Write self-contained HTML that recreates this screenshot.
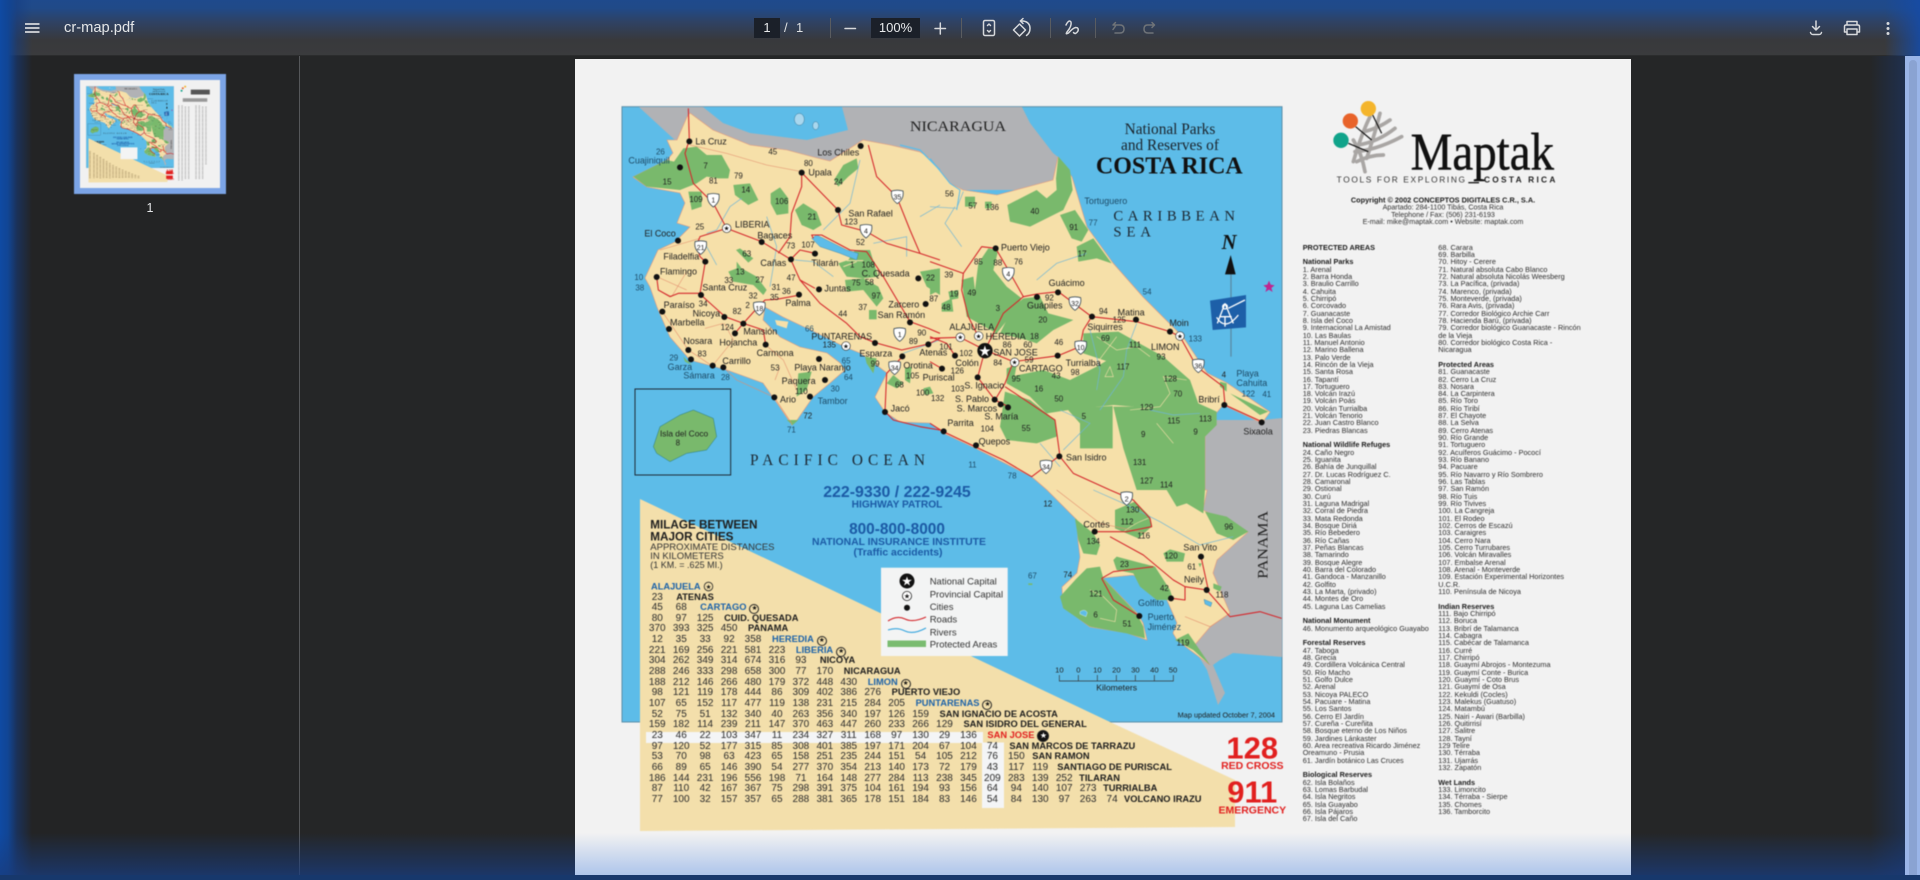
<!DOCTYPE html>
<html lang="en"><head><meta charset="utf-8"><title>cr-map.pdf</title>
<style>
html,body{margin:0;padding:0;width:1920px;height:880px;overflow:hidden;background:#252627;font-family:"Liberation Sans",sans-serif}
.a{position:absolute}
#hd{left:0;top:0;width:1920px;height:56px;background:linear-gradient(#1f4a8c 0,#204a88 8px,#2f4263 22px,#38393c 40px,#3a3b3d 55px,#1c1c1d 56px)}
#side{left:0;top:56px;width:300px;height:824px;background:#232425;border-right:1px solid #55575a;box-sizing:border-box}
#title{left:64px;top:19px;font-size:14.7px;line-height:18px;color:#e4e6e8;filter:blur(.3px)}
.sep{position:absolute;top:18px;width:1px;height:20px;background:#5a5c60}
.box{position:absolute;top:18px;height:20px;background:#1b2029;color:#e8eaec;font-size:13px;line-height:20px;text-align:center}
.tb{position:absolute;top:18px;color:#dfe1e3;font-size:13px;line-height:20px}
#pg{left:575px;top:59px;width:1056px;height:821px;background:#f2f2f2}
#tbl{left:645.3px;top:592.5px;font-size:10px;line-height:10.67px;color:#2a2a2a;filter:blur(.4px)}
#tbl div{display:flex;height:10.67px;white-space:nowrap}
#tbl i{font-style:normal;width:23.95px;text-align:center;flex:none}
#tbl b{margin-left:7px;font-size:9.3px;position:relative;top:-1px;color:#1d1d1d}
#tbl b.u{color:#1c62a8}#tbl b.r{color:#e1201f}
#tbl s{display:inline-block;text-decoration:none;width:8px;height:8px;border:1px solid #222;border-radius:50%;font-size:6.5px;line-height:8px;text-align:center;color:#111;margin-left:3px;vertical-align:0;font-weight:400}
.ls{font-size:7.3px;line-height:7.33px;color:#2e2e2e;white-space:pre;filter:blur(.4px)}
.ls b{color:#1b1b1b}
#lft{left:0;top:0;width:32px;height:880px;background:linear-gradient(90deg,#0f4aa3 0,#114594 8px,rgba(20,60,130,.55) 17px,rgba(20,60,130,0) 32px)}
#rgt{left:1870px;top:56px;width:35px;height:824px;background:linear-gradient(90deg,rgba(25,50,100,0),rgba(25,55,110,.55))}
#rht{left:1885px;top:0;width:35px;height:56px;background:linear-gradient(90deg,rgba(25,75,160,0),rgba(22,75,165,.9))}
#bar{left:1905px;top:56px;width:15px;height:824px;background:#9ab5e8}
#bar2{left:1909px;top:60px;width:8px;height:820px;background:#8aa3d2;border-radius:4px 4px 0 0}
#btm{left:575px;top:833px;width:1056px;height:42px;background:linear-gradient(rgba(80,135,225,0),rgba(80,135,225,.42))}
#btmL{left:0;top:833px;width:575px;height:42px;background:linear-gradient(rgba(25,60,125,0),rgba(25,60,125,.75))}
#btmR{left:1631px;top:833px;width:274px;height:42px;background:linear-gradient(rgba(25,60,125,0),rgba(25,60,125,.75))}
#btm2{left:0;top:875px;width:1920px;height:5px;background:#17386c}
</style></head><body>
<div class="a" id="side"></div>
<div class="a" id="pg"></div>

<svg class="a" style="left:0;top:0;filter:blur(.4px)" width="1920" height="880" viewBox="0 0 1920 880" font-family="'Liberation Sans',sans-serif" fill="#1d1d1d">
<defs>
<g id="sh"><path d="M-17-17Q0-22 17-17Q21 6 0 21Q-21 6-17-17Z" fill="#fff" stroke="#3a4a55" stroke-width="2.5"/></g>
</defs>
<g id="map">
<rect x="622" y="106.7" width="660" height="615.3" fill="#5dbce8" stroke="#5b8ea8" stroke-width="1"/>
<path d="M639 107H1022L1030 123L1053 153L1058 157L1053 190H930L700 150L677 142Z" fill="#b1b2b5"/>
<path d="M703 107H842L848 130L807 140L750 133L723 123Z" fill="#5dbce8"/>
<path d="M1282 418V657L1233 653L1220 660L1213 665L1225 693L1218 705L1207 670L1193 647L1180 500L1205 420L1262 420Z" fill="#b1b2b5"/>
<path fill="#f6e0a9" stroke="#e79a7a" stroke-width=".6" d="M677 140L687 117L690 113L713 130L750 145L787 150L817 158L830 161L863 140L890 145L920 152L930 158L950 183L963 190L997 195L1027 187L1053 180L1058 157L1072 177L1087 227L1113 263L1143 297L1183 337L1207 373L1227 383L1270 412L1262 423L1223 405L1213 417L1205 437L1205 490L1207 490L1203 510L1248 532L1217 560L1213 573L1230 613L1210 627L1193 647L1210 665L1190 650L1177 640L1173 633L1177 623L1167 600L1157 587L1133 575L1103 578L1137 613L1143 623L1147 640L1127 633L1090 627L1063 607L1062 587L1077 573L1080 557L1078 540L1077 520L1047 490L1032 477L975 448L943 433L930 423L900 422L885 412L875 397L887 373L870 360L860 353L845 347L817 333L783 317L765 307L763 320L780 337L800 347L827 353L840 363L845 370L830 383L813 397L797 420L792 425L777 403L763 383L727 370L690 360L670 337L657 307L650 287L645 278L658 250L675 242L690 227L677 223L685 203L680 193L647 187L633 177L667 160L673 153L667 140Z"/>

<!-- Z4 shapes -->
<g transform="translate(600 90) scale(.33333)">
<g fill="#79b96c">
<path d="M100 260L200 210L222 215L250 175L290 170L320 195L365 195L390 240L385 265L355 265L320 260L290 280L240 300L140 290Z"/>
<path d="M265 305L305 305L305 350L275 360Z"/>
<path d="M400 285L450 280L475 330L445 345L405 315Z"/>
<path d="M512 310L540 292L565 325L565 370L530 375L512 340Z"/>
<path d="M585 360L610 340L650 365L665 405L640 420L605 405Z"/>
<path d="M702 270L730 225L770 205L775 235L745 260L715 290Z"/>
<path d="M408 480L420 475L460 505L445 518Z"/>
<path d="M385 545L410 535L410 515L425 535L470 560L500 600L490 615L460 585L400 575Z"/>
<path d="M715 520L745 510L765 480L810 480L825 530L835 560L790 565L740 560Z"/>
<path d="M735 570L790 565L835 590L850 625L830 650L790 600L740 605Z"/>
<path d="M807 660H830V688H807Z"/>
<path d="M595 850L635 845L620 900L590 920Z"/>
<path d="M960 545L1020 535L1020 615L980 590Z"/>
<path d="M795 800L830 805L820 850L800 820Z"/>
<path d="M860 880L880 855L910 880L890 895Z"/>
<path d="M915 835L935 830L930 880L915 870Z"/>
<path d="M970 895L990 890L1000 910L975 915Z"/>
<path d="M250 800L275 825L255 815Z"/>
<path d="M560 990L595 990L578 1005Z"/>
</g>
<path d="M525 690L565 695L560 715L530 705Z" fill="#f6e0a9"/>
<path d="M635 445L650 435L740 480L775 490L770 510L720 490L660 470Z" fill="#5dbce8" stroke="#2f6f96" stroke-width="1"/>
<path d="M740 512H790M730 530L770 515" stroke="#f6e0a9" stroke-width="3" fill="none"/>
<path d="M900 165L960 180L1020 240" fill="none" stroke="#5dbce8" stroke-width="4"/>
<ellipse cx="598" cy="88" rx="15" ry="18" fill="#a9d7ee" stroke="#3c7a9a" stroke-width="1.5"/><ellipse cx="647" cy="107" rx="9" ry="12" fill="#a9d7ee" stroke="#3c7a9a" stroke-width="1.5"/>
<rect x="105" y="897" width="287" height="258" fill="none" stroke="#1e2a36" stroke-width="3"/>
<path d="M160 1070L180 1010L240 975L280 960L340 985L350 1040L320 1080L260 1090L210 1115L170 1090Z" fill="#79b96c" stroke="#2a7a80" stroke-width="1.5"/>
<g fill="none" stroke="#6fb5d6" stroke-width="2"><path d="M320 430L350 420L390 350L425 325M320 470L350 525M585 510L640 515L700 560M670 420L750 340L780 210M500 380L530 470L510 590M820 460L920 440L920 500M910 790L1020 750M960 380L1020 345"/></g>
<g fill="none" stroke="#e28c6c" stroke-width="1.6"><path d="M270 165L380 190L500 225L605 245M170 560L260 600M187 665L265 780L337 828M337 828L400 750L373 700M370 832L410 870L523 922M523 922L575 1000M497 765L550 810L590 900M175 600L215 620L260 545M315 715L370 700M540 830L525 870M300 445L180 480"/></g>
<g fill="none" stroke="#d4262b" stroke-width="3.2" stroke-linejoin="round"><g id="r4">
<path d="M265 55L268 150L255 190L280 280L340 340L380 415L485 455L572 508L600 480L645 490M572 508L600 570L660 640L740 700L780 740L825 758L905 780L985 762L1020 745"/>
<path d="M380 415L300 440L290 465L300 500L316 515L300 610L235 610L210 620L175 600L170 560"/>
<path d="M605 248L714 360L725 405L800 425L860 460L960 490L1020 510"/>
<path d="M605 248L605 290L575 370L570 440L535 490"/>
<path d="M805 165L830 260L890 320L930 420L960 490"/>
<path d="M303 615L375 680L430 700L490 720L497 765M430 700L405 730M600 615L530 628L495 630L475 650L430 700"/>
<path d="M640 445L635 435L665 435L750 480L800 485L850 560L930 695L985 715L1020 730"/>
<path d="M907 800L860 850L855 965L880 990L960 1010L1020 1020"/>
<path d="M645 595L600 570"/>
</g></g>
</g>

<!-- Z5 shapes -->
<g transform="translate(930 90) scale(.33333)">
<g fill="#79b96c">
<path d="M232 345L320 300L350 325L380 300L378 265L385 200L420 240L428 300L400 360L300 410L240 395Z"/>
<path d="M390 375L435 360L475 420L455 455L425 445Z"/>
<path d="M440 470L490 445L545 520L500 505L445 515Z"/>
<path d="M95 570L130 560L135 600L145 520L175 475L205 480L190 540L230 590L275 625L240 680L200 730L110 680Z"/>
<path d="M280 625L330 620L355 670L430 690L370 720L320 760L290 750L210 730L250 650Z"/>
<path d="M460 730L565 725L700 800L780 870L805 940L860 965L860 1005L825 1040L825 1200L620 1200L580 1075L550 950L610 950L580 830L460 790Z"/>
<path d="M240 860L340 840L420 870L500 830L550 800L600 850L610 950L550 945L415 960L350 970L300 920L230 880Z"/>
<path d="M410 955L548 948L548 1075L450 1075L450 1000Z"/>
<path d="M225 905L300 930L375 990L380 1040L320 1060L230 1050L210 1010Z"/>
<path d="M35 640L65 625L70 665L35 665Z"/><path d="M55 605L85 600L85 625L60 630Z"/>
<path d="M0 540L30 535L30 600L0 615Z"/>
<path d="M105 320H135V350H105Z"/><path d="M165 335H185V355H165Z"/>
<path d="M230 835L260 825L250 880L230 880Z"/>
<path d="M130 1060L148 1060L140 1078Z"/>
<path d="M870 875L890 880L890 905L870 890Z"/><path d="M900 910L1015 965L990 975Z"/>
</g>
<path d="M0 205L60 280L90 300L80 360" fill="none" stroke="#5dbce8" stroke-width="3"/>
<g fill="none" stroke="#6fb5d6" stroke-width="2"><path d="M75 350L45 400L95 470M0 350L80 355L100 305M320 570L380 520L470 490M480 720L510 840L500 900M620 700L590 780L580 860L510 960M390 960L480 1000L400 1080M330 1060L390 1130M660 960L730 975L810 970"/></g>
<g fill="none" stroke="#f6e0a9" stroke-width="1.8"><path d="M500 740L560 780L620 770L660 800M600 960L690 950L720 910L700 860L770 870M680 1000L730 1060M500 820L560 740M540 830L550 860L525 860L540 830Z"/></g>
<g fill="none" stroke="#d4262b" stroke-width="3.2" stroke-linejoin="round"><g id="r5">
<path d="M0 515L100 550L95 600L115 680L145 740"/>
<path d="M100 550L155 470L197 475L235 540L280 620L320 612L385 605L485 680L460 720L450 770"/>
<path d="M485 680L620 695L720 725L750 740L800 830L880 890L885 945L995 995"/>
<path d="M280 620L220 670L165 780"/>
<path d="M0 745L90 742L165 780L250 815L385 797L450 770"/>
<path d="M0 740L50 760L75 797M0 815L36 836M165 780L143 862L194 929"/>
<path d="M250 815L225 880L195 930L235 950"/>
<path d="M225 890L375 990L390 1100L430 1150L540 1200"/>
<path d="M385 1100L345 1130L305 1160L220 1110L135 1070L40 1025L0 1000"/>
</g></g>
<path d="M903 553V800" stroke="#5a8ba5" stroke-width="4"/>
<path d="M885 553H917L902 495Z" fill="#111"/>
<text x="875" y="477" font-family="'Liberation Serif',serif" font-style="italic" font-weight="700" font-size="62" fill="#111">N</text>
<path d="M840 632L948 615V712L848 720Z" fill="#1d5fa8"/>
<g fill="none" stroke="#fff" stroke-width="4"><path d="M885 640L862 700M885 640L910 700M868 680H905M860 682Q885 725 925 675M885 680V710M895 655L945 630"/><circle cx="885" cy="650" r="7"/></g>
<path d="M1017 572L1022 584L1034 586L1024 594L1028 606L1017 599L1006 606L1010 594L1000 586L1012 584Z" fill="#c0258f"/>
</g>

<!-- Z7 shapes -->
<g transform="translate(1000 490) scale(.33333)">
<g fill="#79b96c">
<path d="M345 60L405 35L450 80L455 110L415 145L345 115Z"/>
<path d="M615 65L680 80L745 125L700 150L650 130Z"/>
<path d="M490 190L510 178L555 190L550 215L500 215Z"/>
<path d="M340 210L350 200L465 230L510 300L520 330L470 330L420 290L400 250L350 240Z"/>
<path d="M225 85L280 130L300 165L290 195L250 190L235 150Z"/>
<path d="M180 320L230 265L260 235L300 230L310 265L410 370L430 410L435 445L380 430L270 410L190 355Z"/>
<path d="M525 450L565 430L630 525L580 480Z"/>
<path d="M500 0L615 0L610 70L560 40L530 50Z"/>
<path d="M640 280L665 290L660 305L640 295Z"/>
<path d="M595 220L605 220L600 232Z"/>
</g>
<path d="M240 365Q255 355 262 368L258 380L240 372Z" fill="#5dbce8" stroke="#fff"/>
<path d="M612 328L636 338L632 350L615 342Z" fill="#5dbce8" stroke="#2f6f96"/>
<path d="M85 280H97V285H85Z" fill="#79b96c"/>
<g fill="none" stroke="#f6e0a9" stroke-width="1.8"><path d="M270 300L310 320L350 360L345 395L300 385M365 130Q400 100 445 85"/></g>
<g fill="none" stroke="#6fb5d6" stroke-width="2"><path d="M280 0L370 40L480 95L600 165L700 140"/></g>
<g fill="none" stroke="#e28c6c" stroke-width="1.6"><path d="M170 0L300 100L440 130M555 380L630 410L690 370"/></g>
<g fill="none" stroke="#d4262b" stroke-width="3.2" stroke-linejoin="round"><g id="r7">
<path d="M330 0L400 30L450 85L455 110L380 125L285 125"/>
<path d="M330 140L430 195L520 270L555 290L620 300L690 380L780 365L845 385"/>
<path d="M555 290L555 330L515 325"/><path d="M603 200L625 300"/>
<path d="M305 265L340 245L460 230"/><path d="M305 265L340 330L418 378"/>
</g></g>
<g fill="#111"><circle cx="284" cy="125" r="9"/><circle cx="603" cy="200" r="9"/><circle cx="620" cy="300" r="9"/><circle cx="513" cy="325" r="9"/><circle cx="418" cy="378" r="9"/></g>
<g font-size="27"><text x="250" y="112">Cortés</text><text x="550" y="182">San Vito</text><text x="552" y="278">Neily</text><text x="414" y="348" fill="#1c4a66">Golfito</text><text x="443" y="390" fill="#1c4a66">Puerto</text><text x="443" y="420" fill="#1c4a66">Jiménez</text>
<g font-size="24"><text x="130" y="50">12</text><text x="378" y="68">130</text><text x="362" y="104">112</text><text x="412" y="145">116</text><text x="260" y="162">134</text><text x="673" y="118">96</text><text x="493" y="206">120</text><text x="562" y="238">61</text><text x="360" y="231">23</text><text x="190" y="262">74</text><text x="84" y="265" fill="#1c4a66">67</text><text x="268" y="320">121</text><text x="647" y="322">118</text><text x="480" y="303">42</text><text x="280" y="383">6</text><text x="368" y="410">51</text><text x="530" y="467">119</text></g></g>
<use href="#sh" transform="translate(380 25)"/><text x="380" y="34" font-size="22" text-anchor="middle">2</text>
<text x="805" y="268" transform="rotate(-90 803 268)" font-family="'Liberation Serif',serif" font-size="45" fill="#222" textLength="203" lengthAdjust="spacingAndGlyphs">PANAMA</text>
<path d="M178 555V573H520V555M235 555V573M292 555V573M349 555V573M406 555V573M463 555V573" fill="none" stroke="#333" stroke-width="2"/>
<g font-size="23" text-anchor="middle"><text x="178" y="548">10</text><text x="235" y="548">0</text><text x="292" y="548">10</text><text x="349" y="548">20</text><text x="406" y="548">30</text><text x="463" y="548">40</text><text x="519" y="548">50</text></g>
<text x="350" y="602" font-size="26" text-anchor="middle">Kilometers</text>
<text x="533" y="683" font-size="21" textLength="292" lengthAdjust="spacingAndGlyphs">Map updated October 7, 2004</text>
</g>

<!-- Z4 dots labels -->
<g transform="translate(600 90) scale(.33333)">
<g fill="#111"><circle cx="268" cy="154" r="9"/><circle cx="240" cy="232" r="9"/><circle cx="605" cy="248" r="9"/><circle cx="714" cy="360" r="9"/><circle cx="782" cy="168" r="9"/><circle cx="485" cy="456" r="9"/><circle cx="573" cy="508" r="9"/><circle cx="645" cy="491" r="9"/><circle cx="657" cy="598" r="9"/><circle cx="597" cy="614" r="9"/><circle cx="234" cy="452" r="9"/><circle cx="316" cy="515" r="9"/><circle cx="170" cy="561" r="9"/><circle cx="303" cy="615" r="9"/><circle cx="187" cy="665" r="9"/><circle cx="207" cy="717" r="9"/><circle cx="373" cy="681" r="9"/><circle cx="430" cy="701" r="9"/><circle cx="405" cy="730" r="9"/><circle cx="265" cy="780" r="9"/><circle cx="273" cy="808" r="9"/><circle cx="338" cy="827" r="9"/><circle cx="370" cy="832" r="9"/><circle cx="497" cy="764" r="9"/><circle cx="657" cy="807" r="9"/><circle cx="675" cy="870" r="9"/><circle cx="630" cy="920" r="9"/><circle cx="523" cy="922" r="9"/><circle cx="855" cy="966" r="9"/><circle cx="955" cy="565" r="9"/><circle cx="977" cy="642" r="9"/><circle cx="930" cy="697" r="9"/><circle cx="825" cy="759" r="9"/><circle cx="985" cy="763" r="9"/><circle cx="907" cy="799" r="9"/></g>
<g fill="#fff" stroke="#333" stroke-width="2"><circle cx="380" cy="415" r="13"/><circle cx="738" cy="768" r="13"/></g>
<g font-size="20" text-anchor="middle" fill="#111"><text x="380" y="422">★</text><text x="738" y="775">★</text></g>
<use href="#sh" transform="translate(340 330)"/><use href="#sh" transform="translate(892 320)"/><use href="#sh" transform="translate(798 423)"/><use href="#sh" transform="translate(302 472)"/><use href="#sh" transform="translate(478 655)"/><use href="#sh" transform="translate(899 733)"/><use href="#sh" transform="translate(884 833)"/>
<g font-size="21" text-anchor="middle"><text x="340" y="338">1</text><text x="892" y="328">35</text><text x="798" y="431">4</text><text x="302" y="480">21</text><text x="478" y="663">18</text><text x="899" y="741">1</text><text x="884" y="841">34</text></g>
<g font-size="27">
<text x="286" y="164">La Cruz</text><text x="85" y="221" fill="#1c4a66">Cuajiniquil</text><text x="652" y="197">Los Chiles</text><text x="625" y="256">Upala</text><text x="745" y="380">San Rafael</text><text x="405" y="413">LIBERIA</text><text x="472" y="445">Bagaces</text><text x="133" y="440">El Coco</text><text x="190" y="508">Filadelfia</text><text x="481" y="528">Cañas</text><text x="634" y="528">Tilarán</text><text x="785" y="560">C. Quesada</text><text x="180" y="554">Flamingo</text><text x="307" y="602">Santa Cruz</text><text x="673" y="605">Juntas</text><text x="556" y="648">Palma</text><text x="191" y="654">Paraíso</text><text x="278" y="680">Nicoya</text><text x="865" y="652">Zarcero</text><text x="833" y="684">San Ramón</text><text x="210" y="706">Marbella</text><text x="430" y="734">Mansión</text><text x="250" y="762">Nosara</text><text x="358" y="767">Hojancha</text><text x="634" y="748">PUNTARENAS</text><text x="958" y="797">Atenas</text><text x="470" y="798">Carmona</text><text x="778" y="800">Esparza</text><text x="203" y="840" fill="#1c4a66">Garza</text><text x="367" y="822">Carrillo</text><text x="583" y="842">Playa Naranjo</text><text x="910" y="836">Orotina</text><text x="250" y="866" fill="#1c4a66">Sámara</text><text x="545" y="882">Paquera</text><text x="540" y="937">Ario</text><text x="653" y="942" fill="#1c4a66">Tambor</text><text x="872" y="965">Jacó</text><text x="180" y="1040" font-size="25">Isla del Coco</text>
</g>
<g font-size="24">
<text x="168" y="194" fill="#1c4a66">26</text><text x="505" y="193">45</text><text x="612" y="228">80</text><text x="310" y="236">7</text><text x="327" y="280">81</text><text x="402" y="265">79</text><text x="188" y="284">15</text><text x="424" y="308">14</text><text x="702" y="283">24</text><text x="525" y="342">106</text><text x="268" y="336">109</text><text x="623" y="389">21</text><text x="733" y="404">123</text><text x="286" y="418">25</text><text x="559" y="476">73</text><text x="604" y="473">107</text><text x="768" y="465">52</text><text x="427" y="500">63</text><text x="750" y="532">1</text><text x="785" y="533">108</text><text x="978" y="572">22</text><text x="103" y="570" fill="#1c4a66">10</text><text x="106" y="602" fill="#1c4a66">38</text><text x="407" y="553">13</text><text x="466" y="577">27</text><text x="373" y="579">33</text><text x="560" y="571">47</text><text x="515" y="600">31</text><text x="546" y="612">36</text><text x="755" y="587">75</text><text x="795" y="585">58</text><text x="815" y="625">97</text><text x="988" y="635">87</text><text x="446" y="626">32</text><text x="510" y="630">35</text><text x="775" y="660">37</text><text x="296" y="650">34</text><text x="436" y="654">2</text><text x="398" y="672">82</text><text x="715" y="680">44</text><text x="362" y="720">124</text><text x="615" y="724" fill="#1c4a66">66</text><text x="952" y="737">90</text><text x="668" y="772">135</text><text x="927" y="762">89</text><text x="293" y="800">83</text><text x="208" y="812" fill="#1c4a66">29</text><text x="725" y="820" fill="#1c4a66">65</text><text x="812" y="829">99</text><text x="512" y="842">53</text><text x="732" y="870" fill="#1c4a66">64</text><text x="363" y="870" fill="#1c4a66">28</text><text x="918" y="866">105</text><text x="885" y="892">68</text><text x="692" y="905" fill="#1c4a66">30</text><text x="948" y="916">100</text><text x="585" y="912">110</text><text x="610" y="985">72</text><text x="561" y="1028" fill="#1c4a66">71</text><text x="227" y="1066">8</text>
</g>
<text x="450" y="1125" font-family="'Liberation Serif',serif" font-size="46" fill="#1c2630" textLength="525" xml:space="preserve">PACIFIC OCEAN</text>
</g>

<!-- Z5 dots labels -->
<g transform="translate(930 90) scale(.33333)">
<g fill="#111"><circle cx="197" cy="475" r="9"/><circle cx="321" cy="621" r="9"/><circle cx="384" cy="607" r="9"/><circle cx="486" cy="680" r="9"/><circle cx="618" cy="689" r="9"/><circle cx="720" cy="725" r="9"/><circle cx="383" cy="797" r="9"/><circle cx="75" cy="797" r="9"/><circle cx="36" cy="836" r="9"/><circle cx="143" cy="862" r="9"/><circle cx="194" cy="929" r="9"/><circle cx="212" cy="943" r="9"/><circle cx="234" cy="952" r="9"/><circle cx="41" cy="1024" r="9"/><circle cx="138" cy="1066" r="9"/><circle cx="388" cy="1099" r="9"/><circle cx="883" cy="945" r="9"/><circle cx="995" cy="997" r="9"/><circle cx="165" cy="782" r="23"/></g>
<g fill="#fff" stroke="#333" stroke-width="2"><circle cx="91" cy="742" r="13"/><circle cx="146" cy="738" r="13"/><circle cx="254" cy="817" r="13"/><circle cx="750" cy="738" r="13"/></g>
<g font-size="20" text-anchor="middle" fill="#111"><text x="91" y="749">★</text><text x="146" y="745">★</text><text x="254" y="824">★</text><text x="750" y="745">★</text></g>
<text x="165" y="798" font-size="44" text-anchor="middle" fill="#fff">★</text>
<use href="#sh" transform="translate(235 552)"/><use href="#sh" transform="translate(435 640)"/><use href="#sh" transform="translate(452 772)"/><use href="#sh" transform="translate(805 827)"/><use href="#sh" transform="translate(348 1130)"/>
<g font-size="21" text-anchor="middle"><text x="235" y="560">4</text><text x="435" y="648">32</text><text x="452" y="780">10</text><text x="805" y="835">36</text><text x="348" y="1138">34</text></g>
<g font-size="27">
<text x="463" y="342" fill="#1c4a66">Tortuguero</text><text x="213" y="482">Puerto Viejo</text><text x="356" y="588">Guácimo</text><text x="291" y="656">Guápiles</text><text x="563" y="677">Matina</text><text x="472" y="720">Siquirres</text><text x="718" y="708">Moin</text><text x="58" y="720">ALAJUELA</text><text x="167" y="748">HEREDIA</text><text x="663" y="780">LIMON</text><text x="190" y="796">SAN JOSE</text><text x="76" y="828">Colón</text><text x="267" y="845">CARTAGO</text><text x="407" y="828">Turrialba</text><text x="-22" y="872">Puriscal</text><text x="919" y="860" fill="#1c4a66">Playa</text><text x="919" y="888" fill="#1c4a66">Cahuita</text><text x="103" y="896">S. Ignacio</text><text x="75" y="936">S. Pablo</text><text x="805" y="937">Bribrí</text><text x="80" y="965">S. Marcos</text><text x="163" y="988">S. María</text><text x="940" y="1034">Sixaola</text><text x="52" y="1008">Parrita</text><text x="146" y="1063">Quepos</text><text x="408" y="1112">San Isidro</text>
</g>
<g font-size="24">
<text x="45" y="320">56</text><text x="115" y="355">57</text><text x="167" y="360">136</text><text x="301" y="372">40</text><text x="476" y="407" fill="#1c4a66">77</text><text x="418" y="420">91</text><text x="443" y="500">17</text><text x="132" y="524">85</text><text x="190" y="526">88</text><text x="252" y="524">76</text><text x="43" y="563">39</text><text x="59" y="620">19</text><text x="112" y="616">49</text><text x="638" y="613" fill="#1c4a66">54</text><text x="345" y="632">92</text><text x="197" y="663">3</text><text x="35" y="660">48</text><text x="325" y="698">20</text><text x="507" y="672">94</text><text x="548" y="698">125</text><text x="776" y="755" fill="#1c4a66">133</text><text x="300" y="747">18</text><text x="373" y="765">46</text><text x="513" y="753">69</text><text x="597" y="773">111</text><text x="28" y="779">101</text><text x="218" y="772">86</text><text x="280" y="772">60</text><text x="680" y="808">93</text><text x="88" y="798">102</text><text x="284" y="818">59</text><text x="190" y="827">84</text><text x="62" y="850">126</text><text x="422" y="855">98</text><text x="365" y="865">43</text><text x="560" y="838">117</text><text x="245" y="875">95</text><text x="701" y="874">128</text><text x="875" y="862">4</text><text x="63" y="905">103</text><text x="313" y="905">16</text><text x="730" y="920">70</text><text x="935" y="920" fill="#1c4a66">122</text><text x="997" y="921" fill="#1c4a66">41</text><text x="3" y="933">132</text><text x="373" y="934">50</text><text x="630" y="960">129</text><text x="455" y="987">5</text><text x="712" y="1001">115</text><text x="807" y="995">113</text><text x="790" y="1033">9</text><text x="633" y="1041">9</text><text x="152" y="1025">104</text><text x="275" y="1023">55</text><text x="609" y="1125">131</text><text x="115" y="1132" fill="#1c4a66">11</text><text x="233" y="1165" fill="#1c4a66">78</text><text x="630" y="1180">127</text><text x="690" y="1192">114</text>
</g>
<g font-family="'Liberation Serif',serif" fill="#1a222a" text-anchor="middle">
<text x="720" y="132" font-size="46">National Parks</text><text x="720" y="180" font-size="46">and Reserves of</text><text x="718" y="250" font-size="72" font-weight="700" fill="#111">COSTA RICA</text>
</g>
<g font-family="'Liberation Serif',serif" font-size="44" fill="#1c2630"><text x="550" y="392" textLength="365">CARIBBEAN</text><text x="550" y="440" textLength="113">SEA</text></g>
</g>
<text x="910" y="131" font-family="'Liberation Serif',serif" font-size="14.6" fill="#222" textLength="96" lengthAdjust="spacingAndGlyphs">NICARAGUA</text>

<!-- cream table panel -->
<path d="M640 499L1110 722L1235 780V827L640 831Z" fill="#f3dfab"/>
<path d="M646 732H983V742.5H1004V808H982V743H646Z" fill="#f4f5f6"/>
<!-- legend -->
<rect x="881" y="567.7" width="126.7" height="88.3" fill="#f3f4f4"/>
<g font-size="9.5" fill="#333"><text x="929.7" y="584.3">National Capital</text><text x="929.7" y="597.3">Provincial Capital</text><text x="929.7" y="610">Cities</text><text x="929.7" y="622.3">Roads</text><text x="929.7" y="635.3">Rivers</text><text x="929.7" y="647.7">Protected Areas</text></g>
<circle cx="907" cy="581" r="7.5" fill="#111"/><text x="907" y="585.5" font-size="12.5" fill="#fff" text-anchor="middle">★</text>
<circle cx="907" cy="596" r="4.6" fill="#fff" stroke="#222" stroke-width=".8"/><text x="907" y="598.6" font-size="7" text-anchor="middle">★</text>
<circle cx="907" cy="607.7" r="3" fill="#111"/>
<path d="M888 621Q897 615 905 619T926 617" fill="none" stroke="#d4262b" stroke-width="1.1"/>
<path d="M888 630Q897 627 905 631T926 628" fill="none" stroke="#35a5de" stroke-width="1.1"/>
<rect x="887.5" y="640.5" width="38.5" height="6.5" fill="#7abc70"/>

<!-- phones -->
<g text-anchor="middle" font-weight="700" fill="#1b5aa5">
<text x="897" y="497" font-size="15.9">222-9330 / 222-9245</text>
<text x="897" y="507.7" font-size="10.2">HIGHWAY PATROL</text>
<text x="897" y="534" font-size="15.4">800-800-8000</text>
<text x="899" y="545" font-size="10.4">NATIONAL INSURANCE INSTITUTE</text>
<text x="898" y="555.7" font-size="10.4">(Traffic accidents)</text>
</g>
<g fill="#1d1d1d">
<text x="650.3" y="528.7" font-size="11.7" font-weight="700">MILAGE BETWEEN</text>
<text x="650.3" y="540.3" font-size="11.7" font-weight="700">MAJOR CITIES</text>
<text x="650.3" y="550" font-size="9.5" fill="#333">APPROXIMATE DISTANCES</text>
<text x="650.3" y="559" font-size="9.5" fill="#333">IN KILOMETERS</text>
<text x="650.3" y="568" font-size="9" fill="#333">(1 KM. = .625 MI.)</text>
</g>
<text x="651" y="589.7" font-size="9.3" font-weight="700" fill="#1c62a8">ALAJUELA</text>
<circle cx="708.5" cy="586.5" r="4.3" fill="none" stroke="#222" stroke-width=".8"/><text x="708.5" y="589" font-size="6.5" text-anchor="middle">★</text>

<!-- emergency -->
<g fill="#e1201f" font-weight="700" text-anchor="middle">
<text x="1252.3" y="758.3" font-size="31">128</text>
<text x="1252.3" y="769" font-size="10.5">RED CROSS</text>
<text x="1252.3" y="802.7" font-size="31">911</text>
<text x="1252.3" y="813.3" font-size="10.5">EMERGENCY</text>
</g>
</g>

<!-- logo and copyright -->
<g transform="translate(1290 90) scale(.33333)">
<g fill="none" stroke="#a9a6a4" stroke-width="11" stroke-linecap="round">
<path d="M225 245Q215 190 190 150M240 80Q215 130 190 215M270 70Q255 130 230 205"/>
<path d="M222 125Q265 115 300 90M205 165Q265 155 315 115M195 185Q260 180 335 140M200 215Q240 195 280 195"/>
</g>
<g stroke="#111" stroke-width="3.5"><path d="M248 75L275 130M197 110L245 150M175 160L235 185"/></g>
<circle cx="235" cy="56" r="23" fill="#f4b52c"/><circle cx="181" cy="93" r="23" fill="#e8632a"/><circle cx="153" cy="151" r="23" fill="#10a38a"/>
<text x="362" y="238" font-family="'Liberation Serif',serif" font-size="158" fill="#111" stroke="#111" stroke-width="1.5" textLength="430" lengthAdjust="spacingAndGlyphs">Maptak</text>
<rect x="535" y="276" width="32" height="4" fill="#161616"/>
<text x="140" y="278" font-size="25" fill="#333" textLength="385">TOOLS FOR EXPLORING</text>
<text x="582" y="278" font-size="25" font-weight="700" fill="#222" textLength="214">COSTA RICA</text>
<g font-size="21.5" text-anchor="middle" fill="#333">
<text x="459" y="337" font-weight="700" fill="#1c1c1c" textLength="553" lengthAdjust="spacingAndGlyphs">Copyright © 2002 CONCEPTOS DIGITALES C.R., S.A.</text>
<text x="459" y="359">Apartado: 284-1100 Tibás, Costa Rica</text>
<text x="459" y="381">Telephone / Fax: (506) 231-6193</text>
<text x="459" y="402">E-mail: mike@maptak.com • Website: maptak.com</text>
</g>
</g>

<!-- thumbnail -->
<rect x="74" y="74" width="152" height="120" fill="#7ba4e6"/>
<rect x="80" y="80" width="140" height="108" fill="#f1f1f1"/>
<g transform="translate(80 80) scale(.13258) translate(-575 -59)">
<use href="#map"/>
<g fill="none" stroke="#d4262b" stroke-width="12">
<use href="#r4" transform="translate(600 90) scale(.33333)"/>
<use href="#r5" transform="translate(930 90) scale(.33333)"/>
<use href="#r7" transform="translate(1000 490) scale(.33333)"/>
</g>
<path d="M640 499L1110 722L1235 780V827L640 831Z" fill="#f3dfab"/>
<rect x="881" y="567.7" width="126.7" height="88.3" fill="#f3f4f4"/>
<path d="M650 595V800M680 610V800M704 625V800M728 640V800M752 655V800M776 670V800M800 685V800M824 700V800M848 712V800M872 725V800M896 735V800M920 745V800M944 755V800M968 765V800M992 775V800M1016 782V800" stroke="#a08a60" stroke-width="14" stroke-opacity=".7" stroke-dasharray="6 5"/>
<rect x="1225" y="745" width="50" height="25" fill="#e1201f"/><rect x="1225" y="780" width="50" height="25" fill="#e1201f"/>
<path d="M1320 250V820M1345 250V820M1370 260V810M1395 260V810M1450 250V810M1475 250V810M1500 260V810M1525 260V700" stroke="#8f8f8f" stroke-width="11" stroke-opacity=".7" stroke-dasharray="6 5"/>
<g transform="translate(1290 90) scale(.33333)"><circle cx="235" cy="56" r="23" fill="#f4b52c"/><circle cx="181" cy="93" r="23" fill="#e8632a"/><circle cx="153" cy="151" r="23" fill="#10a38a"/><rect x="362" y="125" width="430" height="110" fill="#555"/><rect x="180" y="320" width="555" height="80" fill="#999"/></g>
</g>
</svg>

<div class="a" id="tbl">
<div><i>23</i><b>ATENAS</b></div>
<div><i>45</i><i>68</i><b class="u">CARTAGO<s>★</s></b></div>
<div><i>80</i><i>97</i><i>125</i><b>CUID. QUESADA</b></div>
<div><i>370</i><i>393</i><i>325</i><i>450</i><b>PANAMA</b></div>
<div><i>12</i><i>35</i><i>33</i><i>92</i><i>358</i><b class="u">HEREDIA<s>★</s></b></div>
<div><i>221</i><i>169</i><i>256</i><i>221</i><i>581</i><i>223</i><b class="u">LIBERIA<s>★</s></b></div>
<div><i>304</i><i>262</i><i>349</i><i>314</i><i>674</i><i>316</i><i>93</i><b>NICOYA</b></div>
<div><i>288</i><i>246</i><i>333</i><i>298</i><i>658</i><i>300</i><i>77</i><i>170</i><b>NICARAGUA</b></div>
<div><i>188</i><i>212</i><i>146</i><i>266</i><i>480</i><i>179</i><i>372</i><i>448</i><i>430</i><b class="u">LIMON<s>★</s></b></div>
<div><i>98</i><i>121</i><i>119</i><i>178</i><i>444</i><i>86</i><i>309</i><i>402</i><i>386</i><i>276</i><b>PUERTO VIEJO</b></div>
<div><i>107</i><i>65</i><i>152</i><i>117</i><i>477</i><i>119</i><i>138</i><i>231</i><i>215</i><i>284</i><i>205</i><b class="u">PUNTARENAS<s>★</s></b></div>
<div><i>52</i><i>75</i><i>51</i><i>132</i><i>340</i><i>40</i><i>263</i><i>356</i><i>340</i><i>197</i><i>126</i><i>159</i><b>SAN IGNACIO DE ACOSTA</b></div>
<div><i>159</i><i>182</i><i>114</i><i>239</i><i>211</i><i>147</i><i>370</i><i>463</i><i>447</i><i>260</i><i>233</i><i>266</i><i>129</i><b>SAN ISIDRO DEL GENERAL</b></div>
<div><i>23</i><i>46</i><i>22</i><i>103</i><i>347</i><i>11</i><i>234</i><i>327</i><i>311</i><i>168</i><i>97</i><i>130</i><i>29</i><i>136</i><b class="r">SAN JOSE<s style="background:#111;color:#fff;width:10px;height:10px;line-height:10px;font-size:8px">★</s></b></div>
<div><i>97</i><i>120</i><i>52</i><i>177</i><i>315</i><i>85</i><i>308</i><i>401</i><i>385</i><i>197</i><i>171</i><i>204</i><i>67</i><i>104</i><i>74</i><b style="margin-left:5px">SAN MARCOS DE TARRAZU</b></div>
<div><i>53</i><i>70</i><i>98</i><i>63</i><i>423</i><i>65</i><i>158</i><i>251</i><i>235</i><i>244</i><i>151</i><i>54</i><i>105</i><i>212</i><i>76</i><i>150</i><b style="margin-left:4px">SAN RAMON</b></div>
<div><i>66</i><i>89</i><i>65</i><i>146</i><i>390</i><i>54</i><i>277</i><i>370</i><i>354</i><i>213</i><i>140</i><i>173</i><i>72</i><i>179</i><i>43</i><i>117</i><i>119</i><b style="margin-left:5px">SANTIAGO DE PURISCAL</b></div>
<div><i>186</i><i>144</i><i>231</i><i>196</i><i>556</i><i>198</i><i>71</i><i>164</i><i>148</i><i>277</i><i>284</i><i>113</i><i>238</i><i>345</i><i>209</i><i>283</i><i>139</i><i>252</i><b style="margin-left:3px">TILARAN</b></div>
<div><i>87</i><i>110</i><i>42</i><i>167</i><i>367</i><i>75</i><i>298</i><i>391</i><i>375</i><i>104</i><i>161</i><i>194</i><i>93</i><i>156</i><i>64</i><i>94</i><i>140</i><i>107</i><i>273</i><b style="margin-left:3px">TURRIALBA</b></div>
<div><i>77</i><i>100</i><i>32</i><i>157</i><i>357</i><i>65</i><i>288</i><i>381</i><i>365</i><i>178</i><i>151</i><i>184</i><i>83</i><i>146</i><i>54</i><i>84</i><i>130</i><i>97</i><i>263</i><i>74</i><b style="margin-left:0">VOLCANO IRAZU</b></div>
</div>

<div class="a ls" style="left:1302.7px;top:243.6px"><b>PROTECTED AREAS</b>

<b>National Parks</b>
1. Arenal
2. Barra Honda
3. Braulio Carrillo
4. Cahuita
5. Chirripó
6. Corcovado
7. Guanacaste
8. Isla del Coco
9. Internacional La Amistad
10. Las Baulas
11. Manuel Antonio
12. Marino Ballena
13. Palo Verde
14. Rincón de la Vieja
15. Santa Rosa
16. Tapantí
17. Tortuguero
18. Volcán Irazú
19. Volcán Poás
20. Volcán Turrialba
21. Volcán Tenorio
22. Juan Castro Blanco
23. Piedras Blancas

<b>National Wildlife Refuges</b>
24. Caño Negro
25. Iguanita
26. Bahía de Junquillal
27. Dr. Lucas Rodríguez C.
28. Camaronal
29. Ostional
30. Curú
31. Laguna Madrigal
32. Corral de Piedra
33. Mata Redonda
34. Bosque Diriá
35. Río Bebedero
36. Río Cañas
37. Peñas Blancas
38. Tamarindo
39. Bosque Alegre
40. Barra del Colorado
41. Gandoca - Manzanillo
42. Golfito
43. La Marta, (privado)
44. Montes de Oro
45. Laguna Las Camelias

<b>National Monument</b>
46. Monumento arqueológico Guayabo

<b>Forestal Reserves</b>
47. Taboga
48. Grecia
49. Cordillera Volcánica Central
50. Río Macho
51. Golfo Dulce
52. Arenal
53. Nicoya PALECO
54. Pacuare - Matina
55. Los Santos
56. Cerro El Jardín
57. Cureña - Cureñita
58. Bosque eterno de Los Niños
59. Jardines Lánkaster
60. Area recreativa Ricardo Jiménez
Oreamuno - Prusia
61. Jardín botánico Las Cruces

<b>Biological Reserves</b>
62. Isla Bolaños
63. Lomas Barbudal
64. Isla Negritos
65. Isla Guayabo
66. Isla Pájaros
67. Isla del Caño</div>

<div class="a ls" style="left:1438.3px;top:243.6px">68. Carara
69. Barbilla
70. Hitoy - Cerere
71. Natural absoluta Cabo Blanco
72. Natural absoluta Nicolás Weesberg
73. La Pacífica, (privada)
74. Marenco, (privada)
75. Monteverde, (privada)
76. Rara Avis, (privada)
77. Corredor Biológico Archie Carr
78. Hacienda Barú, (privada)
79. Corredor biológico Guanacaste - Rincón
de la Vieja
80. Corredor biológico Costa Rica -
Nicaragua

<b>Protected Areas</b>
81. Guanacaste
82. Cerro La Cruz
83. Nosara
84. La Carpintera
85. Río Toro
86. Río Tiribí
87. El Chayote
88. La Selva
89. Cerro Atenas
90. Río Grande
91. Tortuguero
92. Acuíferos Guácimo - Pococí
93. Río Banano
94. Pacuare
95. Río Navarro y Río Sombrero
96. Las Tablas
97. San Ramón
98. Río Tuis
99. Río Tivives
100. La Cangreja
101. El Rodeo
102. Cerros de Escazú
103. Caraigres
104. Cerro Nara
105. Cerro Turrubares
106. Volcán Miravalles
107. Embalse Arenal
108. Arenal - Monteverde
109. Estación Experimental Horizontes
U.C.R.
110. Península de Nicoya

<b>Indian Reserves</b>
111. Bajo Chirripó
112. Boruca
113. Bribrí de Talamanca
114. Cabagra
115. Cabécar de Talamanca
116. Curré
117. Chirripó
118. Guaymí Abrojos - Montezuma
119. Guaymí Conte - Burica
120. Guaymí - Coto Brus
121. Guaymí de Osa
122. Kekuldi (Cocles)
123. Malekus (Guatuso)
124. Matambú
125. Nairi - Awari (Barbilla)
126. Quitirrisí
127. Salitre
128. Tayní
129 Telire
130. Térraba
131. Ujarrás
132. Zapatón

<b>Wet Lands</b>
133. Limoncito
134. Térraba - Sierpe
135. Chomes
136. Tamborcito</div>

<div class="a" style="left:0;top:200px;width:300px;text-align:center;color:#e4e6e8;font-size:12.5px;line-height:16px">1</div>

<div class="a" id="hd"></div>
<div class="a" id="rgt"></div>
<div class="a" id="rht"></div>
<div class="a" id="lft"></div>
<div class="a" id="bar"></div>
<div class="a" id="bar2"></div>
<div class="a" id="btm"></div>
<div class="a" id="btmL"></div>
<div class="a" id="btmR"></div>
<div class="a" id="btm2"></div>

<div class="a" id="title">cr-map.pdf</div>
<div class="box" style="left:754px;width:26px">1</div>
<div class="tb" style="left:784px">/</div>
<div class="tb" style="left:796px">1</div>
<div class="sep" style="left:830px"></div>
<div class="box" style="left:871px;width:49px">100%</div>
<div class="sep" style="left:961px"></div>
<div class="sep" style="left:1050px"></div>
<div class="sep" style="left:1095px"></div>
<svg class="a" style="left:0;top:0" width="1920" height="56" viewBox="0 0 1920 56" fill="none" stroke="#d6d8db" stroke-width="1.5" stroke-linecap="round" stroke-linejoin="round">
<path d="M25 24H39.500M25 28H39.500M25 32H39.500" stroke-width="1.800" stroke-linecap="butt"/>
<path d="M845 28.500H855.500M935 28.500H945.500M940.300 23V34"/>
<rect x="983.500" y="20.500" width="11" height="15" rx="1.500"/>
<path d="M987.500 25.500L989 24L990.500 25.500M987.500 30.500L989 32L990.500 30.500"/>
<path d="M1019.500 24L1025.500 30L1019.500 36L1013.500 30Z"/>
<path d="M1021 21H1023Q1030 22 1030 28.500Q1030 33 1026.500 35.500M1023 18.500L1020.300 21L1023 23.500"/>
<path d="M1066 25Q1069 19 1071 22Q1072 26 1067 32Q1065 35 1068.500 33Q1073 28 1075.500 27.500Q1079 27.500 1078 31Q1075.500 35 1073.500 32.500"/>
<g stroke="#6f7378"><path d="M1113 29.500L1115.500 26M1113 25H1120Q1124 25 1124 29Q1124 33 1120 33H1115M1113 25L1115.500 22.500"/><path d="M1154.500 25H1147.500Q1144 25 1144 29Q1144 33 1148 33H1153M1154.500 25L1152 22.500M1154.500 25L1152 27.500"/></g>
<path d="M1816 21V29.500M1812.500 26.500L1816 30L1819.500 26.500M1810.500 32.500Q1811 34.500 1813 34.500H1819Q1821 34.500 1821.500 32.500"/>
<path d="M1847 25V21.500H1857V25M1846 32H1844.500V26.500Q1844.500 25 1846 25H1858Q1859.500 25 1859.500 26.500V32H1858M1847 29H1857V34.500H1847Z"/>
<g fill="#d6d8db" stroke="none"><circle cx="1888" cy="23.500" r="1.500"/><circle cx="1888" cy="28.500" r="1.500"/><circle cx="1888" cy="33.500" r="1.500"/></g>
</svg>
</body></html>
